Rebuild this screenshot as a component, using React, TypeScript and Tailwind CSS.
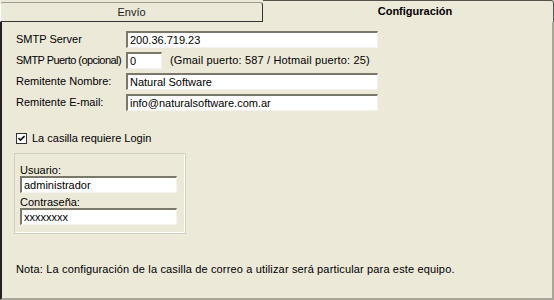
import React, { useState } from 'react';

const font = { fontFamily: '"Liberation Sans", Arial, sans-serif' };

const Field = ({ value, className }: { value: string; className: string }) => (
  <div
    className={`h-[17px] bg-white border-t-2 border-l-2 border-t-[#7a776b] border-l-[#7a776b] border-b border-r border-b-[#f4f3ee] border-r-[#f4f3ee] px-[2px] leading-[14px] text-[11px] text-black whitespace-nowrap overflow-hidden ${className}`}
  >
    {value}
  </div>
);

const Row = ({ label, tight, children }: { label: string; tight?: boolean; children: React.ReactNode }) => (
  <div className="flex items-center h-[21px]">
    <div className={`w-[110px] text-[11px] text-black whitespace-nowrap ${tight ? 'tracking-[-0.55px]' : ''}`}>{label}</div>
    {children}
  </div>
);

export default function App() {
  const [requiresLogin, setRequiresLogin] = useState(true);

  return (
    <div className="w-[554px] h-[300px] bg-[#ece9d8] flex flex-col overflow-hidden" style={font}>
      {/* tabs */}
      <div className="flex h-[22px] shrink-0">
        <div className="w-[263px] mt-[2px] flex items-center justify-center border-t border-l border-r border-b border-t-[#9d9a8f] border-l-[#fefefe] border-r-[#333] border-b-[#333] rounded-tl-[3px] rounded-tr-[3px] text-[11px] text-[#222]">
          Envío
        </div>
        <div className="flex-1 flex items-center justify-center pl-[14px] border-t border-r border-t-[#56534a] border-r-[#555] rounded-tr-[3px] text-[11px] font-bold text-black">
          Configuración
        </div>
      </div>

      {/* panel */}
      <div className="flex-1 flex flex-col border-l-2 border-l-[#222] border-r-2 border-r-[#a9a699] border-b-2 border-b-[#a9a699] pl-[14px] pt-[7px]">
        <Row label="SMTP Server">
          <Field value="200.36.719.23" className="w-[252px]" />
        </Row>
        <Row label="SMTP Puerto (opcional)" tight>
          <Field value="0" className="w-[36px]" />
          <span className="ml-[8px] text-[11px] text-black tracking-[0.15px]">(Gmail puerto: 587 / Hotmail puerto: 25)</span>
        </Row>
        <Row label="Remitente Nombre:">
          <Field value="Natural Software" className="w-[252px]" />
        </Row>
        <Row label="Remitente E-mail:">
          <Field value="info@naturalsoftware.com.ar" className="w-[252px]" />
        </Row>

        <label className="flex items-center mt-[17px] h-[16px] text-[11px] text-black">
          <span
            onClick={() => setRequiresLogin(!requiresLogin)}
            className="w-[11px] h-[11px] bg-white border border-[#333] flex items-center justify-center mr-[5px]"
          >
            {requiresLogin && (
              <svg width="7" height="7" viewBox="0 0 7 7">
                <path d="M0.5 3 L2.5 5 L6.5 1" stroke="#111" strokeWidth="1.6" fill="none" />
              </svg>
            )}
          </span>
          La casilla requiere Login
        </label>

        <div className="mt-[7px] -ml-[2px] w-[172px] h-[81px] border border-[#d0d0bf] shadow-[inset_-1px_-1px_0_#fff] px-[5px] pt-[10px] flex flex-col">
          <div className="text-[11px] leading-[12px] text-black">Usuario:</div>
          <Field value="administrador" className="w-[157px] h-[15px] leading-[12px]" />
          <div className="mt-[3px] text-[11px] leading-[12px] text-black">Contraseña:</div>
          <Field value="xxxxxxxx" className="w-[157px] h-[15px] leading-[10px] text-[8px] text-[#555]" />
        </div>

        <div className="mt-[27px] text-[11px] text-black tracking-[0.15px]">
          Nota: La configuración de la casilla de correo a utilizar será particular para este equipo.
        </div>
      </div>
    </div>
  );
}
